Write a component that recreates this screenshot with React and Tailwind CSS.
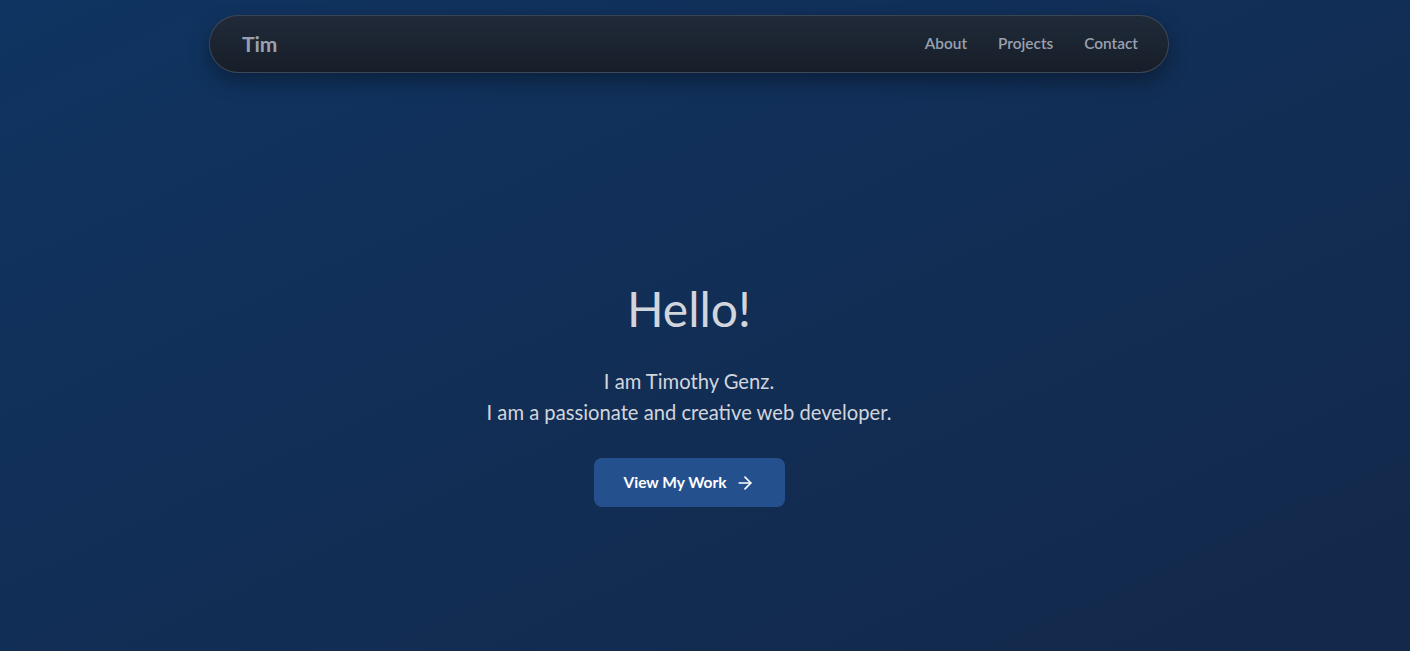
import React from "react";
import { ArrowRight } from "lucide-react";

export default function App() {
  return (
    <div className="min-h-screen w-full bg-gradient-to-br from-[#0f3461] to-[#13284a] font-['Lato','Noto_Sans',sans-serif] text-gray-300">
      <div className="w-[1378px] flex flex-col items-center">
        {/* nav */}
        <nav className="mt-[15px] w-[960px] h-[58px] flex items-center justify-between pl-8 pr-[30px] rounded-full border border-gray-600/70 bg-gradient-to-b from-[#202a39] to-[#171e29] shadow-[0_8px_20px_rgba(0,0,0,0.35)]">
          <span className="text-[21px] font-bold text-gray-400">Tim</span>
          <div className="flex items-center gap-[31px] text-[15.4px] font-semibold text-gray-400">
            <a>About</a>
            <a>Projects</a>
            <a>Contact</a>
          </div>
        </nav>

        {/* hero */}
        <section className="mt-[212px] flex flex-col items-center text-center">
          <h1 className="text-[48px] leading-none font-normal text-gray-300">Hello!</h1>
          <p className="mt-[33px] text-[20.2px] leading-[31px] text-gray-300">
            I am Timothy Genz.
            <br />
            I am a passionate and creative web developer.
          </p>
          <button className="mt-[30px] w-[191px] h-[49px] flex items-center justify-center gap-2 rounded-lg bg-[#25508e] text-[15.5px] font-bold text-white">
            View My Work
            <ArrowRight className="h-5 w-5" strokeWidth={2} />
          </button>
        </section>
      </div>
    </div>
  );
}
